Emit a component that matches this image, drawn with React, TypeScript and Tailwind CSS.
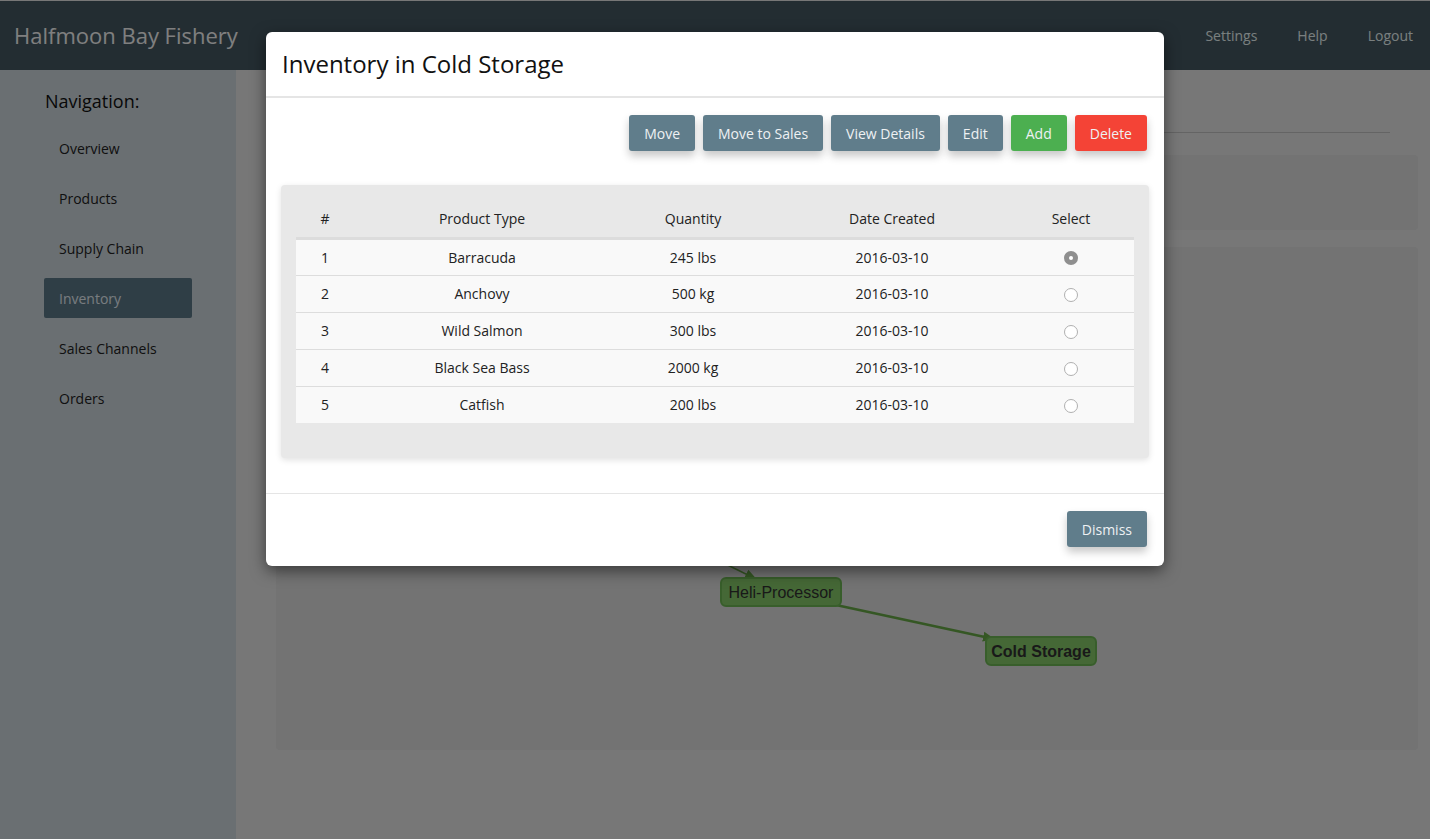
import React, { useState } from "react";

const rows = [
  { id: 1, type: "Barracuda", qty: "245 lbs", date: "2016-03-10" },
  { id: 2, type: "Anchovy", qty: "500 kg", date: "2016-03-10" },
  { id: 3, type: "Wild Salmon", qty: "300 lbs", date: "2016-03-10" },
  { id: 4, type: "Black Sea Bass", qty: "2000 kg", date: "2016-03-10" },
  { id: 5, type: "Catfish", qty: "200 lbs", date: "2016-03-10" },
];

const navItems = ["Overview", "Products", "Supply Chain", "Inventory", "Sales Channels", "Orders"];

function ActionButton({ label, color = "grey" }: { label: string; color?: "grey" | "green" | "red" }) {
  const bg =
    color === "green" ? "bg-[#4caf50]" : color === "red" ? "bg-[#f44336]" : "bg-[#607d8b]";
  return (
    <button
      className={`${bg} h-9 px-[15px] rounded-[3px] text-[14px] text-[#eef1f3] shadow-[0_5px_9px_rgba(0,0,0,0.22)]`}
    >
      {label}
    </button>
  );
}

function Radio({ checked, onClick }: { checked: boolean; onClick: () => void }) {
  return (
    <span
      onClick={onClick}
      className={`inline-flex items-center justify-center w-[14px] h-[14px] rounded-full cursor-pointer ${
        checked ? "bg-[#8f8f8f]" : "bg-white border border-[#b0b0b0]"
      }`}
    >
      {checked && <span className="w-[4px] h-[4px] rounded-full bg-white" />}
    </span>
  );
}

function SupplyGraph() {
  return (
    <svg className="w-full h-full" viewBox="0 0 1142 503">
      <defs>
        <marker
          id="arrow"
          markerUnits="userSpaceOnUse"
          markerWidth="12"
          markerHeight="12"
          refX="11"
          refY="6"
          orient="auto"
        >
          <path d="M0,1 L12,6 L0,11 z" fill="#6aae48" />
        </marker>
      </defs>
      <line x1="330" y1="258" x2="480" y2="332" stroke="#6aae48" strokeWidth="1.5" markerEnd="url(#arrow)" />
      <line x1="560" y1="358" x2="718" y2="392" stroke="#6aae48" strokeWidth="2.5" markerEnd="url(#arrow)" />
      <rect x="445" y="331" width="120" height="28" rx="5" fill="#8ad06c" stroke="#70bc56" strokeWidth="2" />
      <text x="505" y="351" textAnchor="middle" fontFamily="'Liberation Sans', Arial, sans-serif" fontSize="16" fill="#333">
        Heli-Processor
      </text>
      <rect x="710" y="390" width="110" height="28" rx="5" fill="#8ad06c" stroke="#70bc56" strokeWidth="2" />
      <text x="765" y="410" textAnchor="middle" fontFamily="'Liberation Sans', Arial, sans-serif" fontSize="16" fontWeight="bold" fill="#333">
        Cold Storage
      </text>
    </svg>
  );
}

export default function App() {
  const [selected, setSelected] = useState(1);

  return (
    <div className="relative w-full h-screen overflow-hidden bg-[#eeeeee] font-['Open_Sans',sans-serif]">
      {/* page behind the modal */}
      <header className="h-[70px] bg-[#465a64] border-t border-[#eeeeee] flex items-center justify-between pl-[14px] pr-[17px]">
        <div className="text-[22px] text-white">Halfmoon Bay Fishery</div>
        <nav className="flex gap-10 text-[14px] text-[#f3ffff]">
          <span>Settings</span>
          <span>Help</span>
          <span>Logout</span>
        </nav>
      </header>
      <div className="flex h-[769px]">
        <aside className="w-[236px] bg-[#d4dee4] pt-[19px]">
          <div className="pl-[45px] text-[18px] leading-[25px] text-[#111]">Navigation:</div>
          <ul className="mt-[14px] ml-[44px] w-[148px] flex flex-col gap-[10px]">
            {navItems.map((item) => (
              <li
                key={item}
                className={`h-10 flex items-center pl-[15px] rounded-[2px] text-[14px] ${
                  item === "Inventory" ? "bg-[#5e7c8c] text-[#f0f8ff]" : "text-[#222]"
                }`}
              >
                {item}
              </li>
            ))}
          </ul>
        </aside>
        <main className="flex-1 pl-10 pr-3">
          <div className="h-[63px] border-b border-[#c8c8c8] mr-7" />
          <div className="mt-[22px] h-[75px] bg-[#e6e6e6] rounded" />
          <div className="mt-[17px] h-[503px] bg-[#e6e6e6] rounded">
            <SupplyGraph />
          </div>
        </main>
      </div>

      {/* overlay + modal */}
      <div className="absolute inset-0 bg-black/50">
        <div className="mx-auto mt-[32px] w-[898px] bg-white rounded-[6px] shadow-[0_5px_15px_rgba(0,0,0,0.5)]">
          <div className="px-[16px] py-[15px] border-b-2 border-[#e5e5e5]">
            <h2 className="text-[24px] leading-[34px] text-[#111]">Inventory in Cold Storage</h2>
          </div>
          <div className="px-[15px] pt-[17px] pb-[35px]">
            <div className="flex justify-end gap-2 pr-[2px]">
              <ActionButton label="Move" />
              <ActionButton label="Move to Sales" />
              <ActionButton label="View Details" />
              <ActionButton label="Edit" />
              <ActionButton label="Add" color="green" />
              <ActionButton label="Delete" color="red" />
            </div>
            <div className="mt-[34px] bg-[#e8e8e8] rounded-[4px] px-[15px] pt-[15px] pb-[35px] shadow-[0_2px_6px_rgba(0,0,0,0.12)]">
              <table className="w-full text-[14px] text-[#222] text-center border-collapse">
                <thead>
                  <tr className="h-[38px] border-b-[3px] border-[#dcdcdc]">
                    <th className="w-[58px] font-normal">#</th>
                    <th className="w-[256px] font-normal">Product Type</th>
                    <th className="w-[166px] font-normal">Quantity</th>
                    <th className="w-[232px] font-normal">Date Created</th>
                    <th className="font-normal">Select</th>
                  </tr>
                </thead>
                <tbody>
                  {rows.map((r, i) => (
                    <tr key={r.id} className={`h-[37px] bg-[#f9f9f9] ${i > 0 ? "border-t border-[#dddddd]" : ""}`}>
                      <td>{r.id}</td>
                      <td>{r.type}</td>
                      <td>{r.qty}</td>
                      <td>{r.date}</td>
                      <td>
                        <div className="flex justify-center pt-[2px]">
                          <Radio checked={selected === r.id} onClick={() => setSelected(r.id)} />
                        </div>
                      </td>
                    </tr>
                  ))}
                </tbody>
              </table>
            </div>
          </div>
          <div className="border-t border-[#e5e5e5] flex justify-end pt-[17px] pb-[19px] pr-[17px]">
            <ActionButton label="Dismiss" />
          </div>
        </div>
      </div>
    </div>
  );
}
